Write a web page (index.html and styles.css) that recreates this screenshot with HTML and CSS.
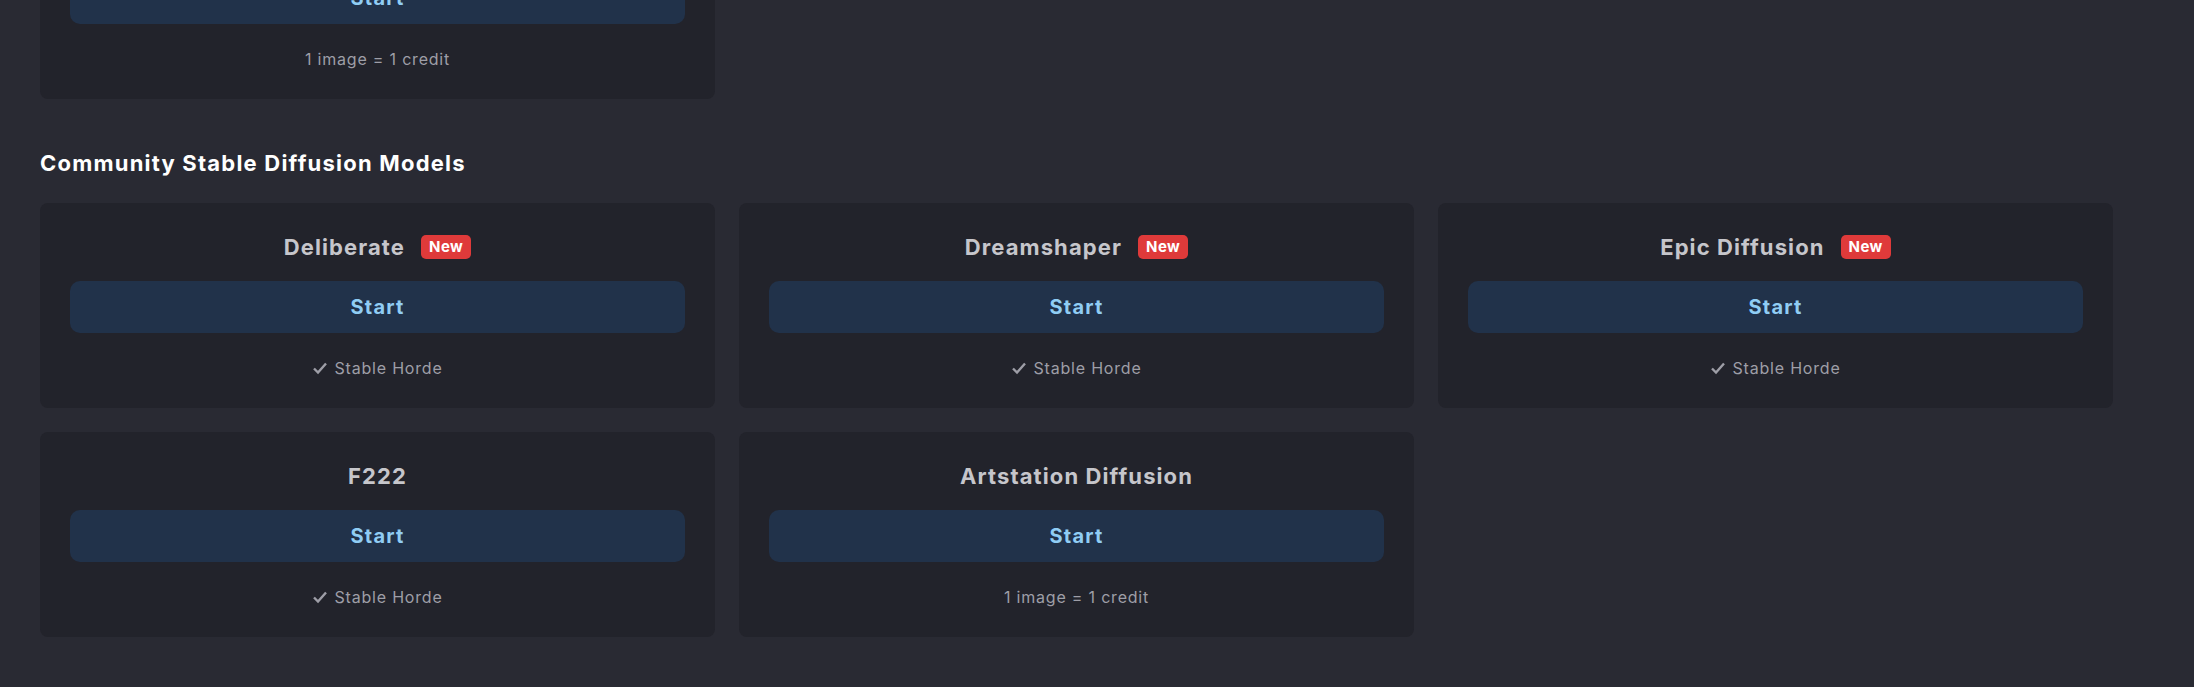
FILE: index.html
```html
<!DOCTYPE html>
<html lang="en">
<head>
  <meta charset="UTF-8" />
  <meta name="viewport" content="width=device-width, initial-scale=1" />
  <title>Models</title>
  <link rel="stylesheet" href="styles.css">
</head>
<body>
  <main class="page">
    <!-- previous section, scrolled mostly out of view -->
    <section class="section scrolled">
      <div class="grid">
        <div class="card">
          <div class="card-title"><span>Stable Diffusion</span></div>
          <button class="start-btn">Start</button>
          <div class="card-note">1 image = 1 credit</div>
        </div>
      </div>
    </section>

    <section class="section">
      <h2 class="section-title">Community Stable Diffusion Models</h2>
      <div class="grid">
        <div class="card">
          <div class="card-title"><span>Deliberate</span><span class="badge">New</span></div>
          <button class="start-btn">Start</button>
          <div class="card-note">
            <svg class="check" viewBox="0 0 16 16"><path d="M2 8.5l4 4 8-9"/></svg>
            Stable Horde
          </div>
        </div>
        <div class="card">
          <div class="card-title"><span>Dreamshaper</span><span class="badge">New</span></div>
          <button class="start-btn">Start</button>
          <div class="card-note">
            <svg class="check" viewBox="0 0 16 16"><path d="M2 8.5l4 4 8-9"/></svg>
            Stable Horde
          </div>
        </div>
        <div class="card">
          <div class="card-title"><span>Epic Diffusion</span><span class="badge">New</span></div>
          <button class="start-btn">Start</button>
          <div class="card-note">
            <svg class="check" viewBox="0 0 16 16"><path d="M2 8.5l4 4 8-9"/></svg>
            Stable Horde
          </div>
        </div>
        <div class="card">
          <div class="card-title"><span>F222</span></div>
          <button class="start-btn">Start</button>
          <div class="card-note">
            <svg class="check" viewBox="0 0 16 16"><path d="M2 8.5l4 4 8-9"/></svg>
            Stable Horde
          </div>
        </div>
        <div class="card">
          <div class="card-title"><span>Artstation Diffusion</span></div>
          <button class="start-btn">Start</button>
          <div class="card-note">1 image = 1 credit</div>
        </div>
      </div>
    </section>
  </main>
</body>
</html>
```

FILE: styles.css
```css
body {
  margin: 0;
  background: #292a33;
  color: #c9c9ce;
  font-family: 'Inter', 'Open Sans', sans-serif;
}
.page {
  padding: 0 40px 50px;
}
/* page is scrolled: the first card is cut by the top edge */
.scrolled {
  margin-top: -106px;
}
.section-title {
  margin: 50px 0 26px;
  font-size: 22px;
  line-height: 28px;
  font-weight: 700;
  letter-spacing: 0.055em;
  color: #ffffff;
}
.grid {
  display: grid;
  grid-template-columns: repeat(3, 675px);
  gap: 24px;
}
.card {
  background: #22232b;
  border-radius: 8px;
  padding: 30px 30px 29px;
  display: flex;
  flex-direction: column;
  align-items: stretch;
}
.card-title {
  display: flex;
  justify-content: center;
  align-items: center;
  gap: 16px;
  height: 28px;
  font-size: 22px;
  font-weight: 700;
  letter-spacing: 0.05em;
  color: #c6c6cb;
  margin-bottom: 20px;
}
.badge {
  background: #df3a3a;
  color: #ffffff;
  font-size: 15px;
  font-weight: 700;
  line-height: 24px;
  letter-spacing: 0.03em;
  padding: 0 8px;
  border-radius: 5px;
}
.start-btn {
  height: 52px;
  border: none;
  border-radius: 10px;
  background: #21324a;
  color: #90cdf4;
  font-family: inherit;
  font-size: 20px;
  font-weight: 700;
  letter-spacing: 0.06em;
  cursor: pointer;
}
.card-note {
  margin-top: 24px;
  height: 22px;
  display: flex;
  justify-content: center;
  align-items: center;
  gap: 6px;
  font-size: 16px;
  letter-spacing: 0.05em;
  color: #9e9ea7;
}
.check {
  width: 16px;
  height: 16px;
  fill: none;
  stroke: #9e9ea7;
  stroke-width: 2.4;
}
```
